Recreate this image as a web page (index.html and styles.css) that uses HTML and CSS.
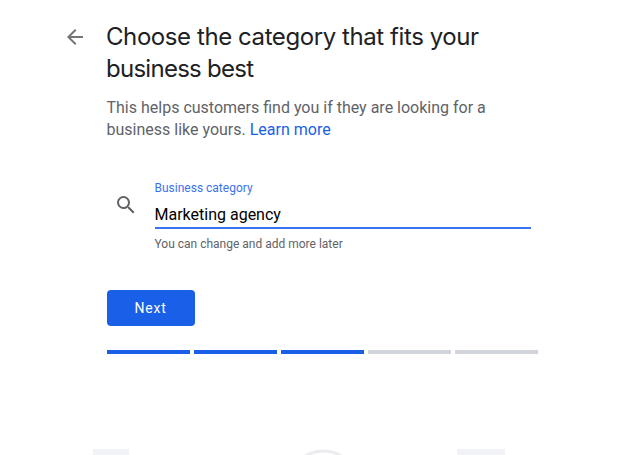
FILE: index.html
```html
<!DOCTYPE html>
<html lang="en">
<head>
<meta charset="utf-8">
<title>Business category</title>
<link rel="stylesheet" href="styles.css">
</head>
<body>
<main class="page">
  <button class="back" aria-label="Back"><svg width="24" height="24" viewBox="0 0 24 24"><path d="M20 11H7.83l5.59-5.59L12 4l-8 8 8 8 1.41-1.41L7.83 13H20v-2z"/></svg></button>
  <section class="content">
    <h1 class="title">Choose the category that fits your<br><span class="tight">business best</span></h1>
    <p class="intro">This helps customers find you if they are looking for a<br>business like yours. <a class="link">Learn more</a></p>
    <div class="field">
      <svg class="search" width="24" height="24" viewBox="0 0 24 24"><path d="M15.5 14h-.79l-.28-.27A6.471 6.471 0 0 0 16 9.500 6.500 6.500 0 1 0 9.500 16c1.610 0 3.090-.59 4.230-1.570l.27.28v.79l5 4.990L20.490 19l-4.990-5zm-6 0C7.010 14 5 11.990 5 9.500S7.010 5 9.500 5 14 7.010 14 9.500 11.990 14 9.500 14z"/></svg>
      <div class="control">
        <div class="label">Business category</div>
        <div class="value">Marketing agency</div>
        <div class="hint">You can change and add more later</div>
      </div>
    </div>
    <button class="next">Next</button>
    <div class="progress"><i class="step done"></i><i class="step done"></i><i class="step done"></i><i class="step"></i><i class="step"></i></div>
  </section>
</main>
<footer class="scene">
  <svg width="635" height="6" viewBox="0 0 635 6"><path class="block" d="M93 0h36v6H93zM457 0h48v6h-48z"/><circle class="ring" cx="323.500" cy="36.500" r="34.500"/></svg>
</footer>
</body>
</html>
```
FILE: styles.css
```css
* { box-sizing: border-box; }
body { margin: 0; height: 455px; overflow: hidden; background: #fff; font-family: Roboto, "Liberation Sans", sans-serif; display: flex; flex-direction: column; justify-content: space-between; }
.page { display: grid; grid-template-columns: 24px 431px; column-gap: 20px; padding: 21px 0 0 63px; }
.back { border: 0; background: none; padding: 0; margin-top: 4px; width: 24px; height: 24px; }
.back svg { display: block; fill: #757575; }
.title { margin: 0 0 0 -1px; font: 400 24px/32px Inter, sans-serif; letter-spacing: -0.42px; color: #202124; white-space: nowrap; }
.tight { letter-spacing: -0.73px; }
.intro { margin: 12px 0 0 -0.5px; font-size: 16px; line-height: 22px; color: #5f6368; white-space: nowrap; }
.link { color: #1a5fe8; }
.field { display: flex; margin-top: 38px; padding: 0 7px 0 7px; }
.search { margin: 14px 17px 0 0; fill: #5f6368; flex: none; }
.control { flex: 1; }
.label { font-size: 12px; line-height: 16px; color: #3b73ee; padding-top: 1px; margin-left: -0.5px; }
.value { height: 33px; padding-top: 9px; font-size: 16px; line-height: 20px; color: #000; border-bottom: 2px solid #3973ef; text-indent: -0.5px; }
.hint { margin: 7px 0 0 -0.5px; font-size: 12px; line-height: 16px; color: #5f6368; }
.next { display: block; width: 88px; height: 36px; margin-top: 38px; padding: 0 1px 0 0; border: 0; border-radius: 4px; background: #1a5fe8; color: #fff; font: 400 14px Roboto, sans-serif; letter-spacing: 0.8px; }
.progress { display: grid; grid-template-columns: repeat(5, 83px); gap: 4px; margin-top: 24px; }
.step { height: 4px; background: #d2d4db; }
.done { background: #1a5fe8; }
.scene svg { display: block; }
.block { fill: #f1f2f5; }
.ring { fill: none; stroke: #ececf0; stroke-width: 3; }
```
